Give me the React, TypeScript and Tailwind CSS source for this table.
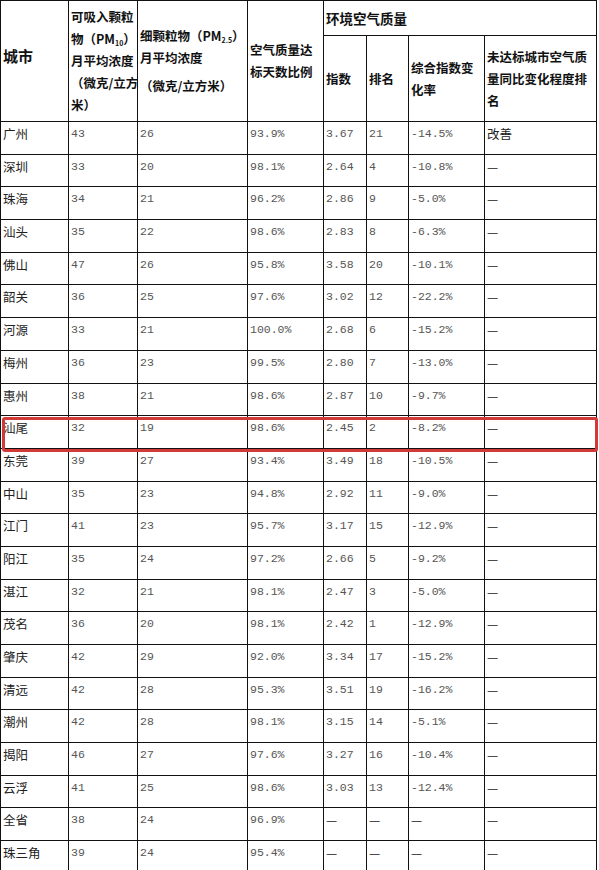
import React from 'react';

// 广东省各城市空气质量月报表
type Row = [string, string, string, string, string, string, string, string];

const rows: Row[] = [
  ['广州', '43', '26', '93.9%', '3.67', '21', '-14.5%', '改善'],
  ['深圳', '33', '20', '98.1%', '2.64', '4', '-10.8%', '—'],
  ['珠海', '34', '21', '96.2%', '2.86', '9', '-5.0%', '—'],
  ['汕头', '35', '22', '98.6%', '2.83', '8', '-6.3%', '—'],
  ['佛山', '47', '26', '95.8%', '3.58', '20', '-10.1%', '—'],
  ['韶关', '36', '25', '97.6%', '3.02', '12', '-22.2%', '—'],
  ['河源', '33', '21', '100.0%', '2.68', '6', '-15.2%', '—'],
  ['梅州', '36', '23', '99.5%', '2.80', '7', '-13.0%', '—'],
  ['惠州', '38', '21', '98.6%', '2.87', '10', '-9.7%', '—'],
  ['汕尾', '32', '19', '98.6%', '2.45', '2', '-8.2%', '—'],
  ['东莞', '39', '27', '93.4%', '3.49', '18', '-10.5%', '—'],
  ['中山', '35', '23', '94.8%', '2.92', '11', '-9.0%', '—'],
  ['江门', '41', '23', '95.7%', '3.17', '15', '-12.9%', '—'],
  ['阳江', '35', '24', '97.2%', '2.66', '5', '-9.2%', '—'],
  ['湛江', '32', '21', '98.1%', '2.47', '3', '-5.0%', '—'],
  ['茂名', '36', '20', '98.1%', '2.42', '1', '-12.9%', '—'],
  ['肇庆', '42', '29', '92.0%', '3.34', '17', '-15.2%', '—'],
  ['清远', '42', '28', '95.3%', '3.51', '19', '-16.2%', '—'],
  ['潮州', '42', '28', '98.1%', '3.15', '14', '-5.1%', '—'],
  ['揭阳', '46', '27', '97.6%', '3.27', '16', '-10.4%', '—'],
  ['云浮', '41', '25', '98.6%', '3.03', '13', '-12.4%', '—'],
  ['全省', '38', '24', '96.9%', '—', '—', '—', '—'],
  ['珠三角', '39', '24', '95.4%', '—', '—', '—', '—'],
];

const cjk = "font-['Noto_Sans_CJK_SC',sans-serif]";
const mono = "font-['Liberation_Mono','Noto_Sans_CJK_SC',monospace]";
const th = `border border-[#111] px-[2px] align-middle text-left font-bold text-[12.5px] leading-[22px] text-[#111] ${cjk}`;

function Cell({ value, first }: { value: string; first?: boolean }) {
  const isText = first || /[\u4e00-\u9fa5—]/.test(value);
  return (
    <td
      className={`h-[32.7px] border border-[#111] px-[2px] pt-[3px] align-top whitespace-nowrap ${
        isText
          ? `${cjk} text-[12.5px] leading-[18px] text-[#222]`
          : `${mono} text-[11.5px] leading-[18px] text-[#555]`
      }`}
    >
      {value}
    </td>
  );
}

export default function App() {
  return (
    <div className="relative w-[599px] bg-white">
      <table className="w-[596px] table-fixed border-collapse">
        <colgroup>
          <col className="w-[68px]" />
          <col className="w-[69px]" />
          <col className="w-[110px]" />
          <col className="w-[76px]" />
          <col className="w-[43px]" />
          <col className="w-[42px]" />
          <col className="w-[76px]" />
          <col className="w-[112px]" />
        </colgroup>
        <thead>
          <tr className="h-[35px]">
            <th rowSpan={2} className={`${th} text-[15px] pb-[10px]`}>
              城市
            </th>
            <th rowSpan={2} className={`${th} whitespace-nowrap`}>
              <div>可吸入颗粒</div>
              <div>
                物（PM<sub className="text-[7px] align-baseline relative top-[2px]">10</sub>）
              </div>
              <div>月平均浓度</div>
              <div>（微克/立方</div>
              <div>米）</div>
            </th>
            <th rowSpan={2} className={`${th} whitespace-nowrap`}>
              <div>
                细颗粒物（PM<sub className="text-[7px] align-baseline relative top-[2px]">2.5</sub>）
              </div>
              <div>月平均浓度</div>
              <div className="mt-[6px]">（微克/立方米）</div>
            </th>
            <th rowSpan={2} className={th}>
              空气质量达标天数比例
            </th>
            <th colSpan={4} className={`${th} text-[13.5px]`}>
              环境空气质量
            </th>
          </tr>
          <tr className="h-[86px]">
            <th className={th}>指数</th>
            <th className={th}>排名</th>
            <th className={th}>综合指数变化率</th>
            <th className={th}>未达标城市空气质量同比变化程度排名</th>
          </tr>
        </thead>
        <tbody>
          {rows.map((r) => (
            <tr key={r[0]}>
              {r.map((v, i) => (
                <Cell key={i} value={v} first={i === 0} />
              ))}
            </tr>
          ))}
        </tbody>
      </table>
      {/* 汕尾の強調枠 */}
      <div className="absolute left-[2px] top-[417px] h-[35px] w-[596px] rounded-[3px] border-[3px] border-[#d23a3a]" />
    </div>
  );
}
